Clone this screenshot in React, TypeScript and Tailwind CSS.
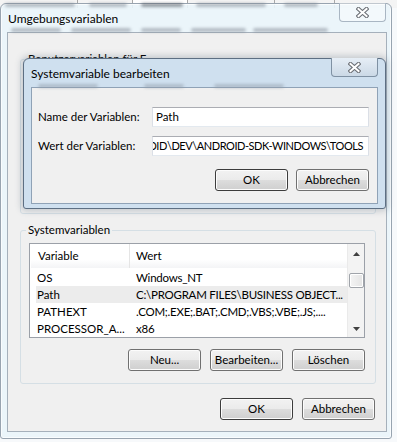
import React from "react";

const rows = [
  ["OS", "Windows_NT"],
  ["Path", "C:\\PROGRAM FILES\\BUSINESS OBJECT..."],
  ["PATHEXT", ".COM;.EXE;.BAT;.CMD;.VBS;.VBE;.JS;...."],
  ["PROCESSOR_A...", "x86"],
];

function Button({ label, className = "", isDefault = false }: { label: string; className?: string; isDefault?: boolean }) {
  return (
    <button
      className={`flex h-[22px] w-[73px] items-center justify-center rounded-[3px] border text-[11.5px] text-black bg-[linear-gradient(to_bottom,#f2f2f2_0%,#ebebeb_48%,#dddddd_50%,#cfcfcf_100%)] shadow-[inset_0_0_0_1px_#fcfcfc] ${
        isDefault ? "border-[#3c3c3c]" : "border-[#707070]"
      } ${className}`}
    >
      {label}
    </button>
  );
}

function CloseGlyph() {
  return (
    <svg width="13" height="11" viewBox="0 0 13 11">
      <path d="M2.5 2 L10.5 9 M10.5 2 L2.5 9" stroke="#6b6f75" strokeWidth="4.2" strokeLinecap="square" fill="none" />
      <path d="M2.5 2 L10.5 9 M10.5 2 L2.5 9" stroke="#ffffff" strokeWidth="2" strokeLinecap="square" fill="none" />
    </svg>
  );
}

function Blur({ className }: { className: string }) {
  return <span className={`absolute h-[4px] rounded-full bg-[#7d8590] opacity-50 blur-[1.5px] ${className}`} />;
}

function ListView() {
  return (
    <div className="ml-[8px] mt-[5px] flex h-[95px] w-[336px] overflow-hidden border border-[#9ba0a8] bg-white">
      <div className="flex min-w-0 flex-1 flex-col overflow-hidden pl-[1px]">
        <div className="flex h-[24px] shrink-0 bg-[linear-gradient(to_bottom,#ffffff_0%,#ffffff_65%,#f3f4f6_100%)] text-[11.5px] text-black">
          <div className="flex w-[99px] items-center border-r border-[#e5e5e5] pl-[7px]">Variable</div>
          <div className="flex flex-1 items-center pl-[6px]">Wert</div>
        </div>
        <div className="flex flex-col pl-[5px] pt-[1px]">
          {rows.map(([k, v]) => (
            <div
              key={k}
              className={`flex h-[17px] items-center whitespace-nowrap text-[11.5px] text-black ${k === "Path" ? "bg-[#ececec]" : ""}`}
            >
              <span className="w-[100px] shrink-0 pl-[1px]">{k}</span>
              <span className="tracking-[-0.25px]">{v}</span>
            </div>
          ))}
        </div>
      </div>
      <div className="flex w-[17px] shrink-0 flex-col items-center border-l border-[#eaeaea] bg-[#f3f3f3]">
        <div className="flex h-[18px] w-full shrink-0 items-center justify-center pt-[2px]">
          <svg width="7" height="4" viewBox="0 0 7 4" className="block">
            <path d="M0 4 L3.5 0 L7 4 Z" fill="#404040" />
          </svg>
        </div>
        <div className="mt-[11px] h-[15px] w-[15px] shrink-0 rounded-[2px] border border-[#a0a4aa] bg-[linear-gradient(to_right,#f4f4f4,#e4e4e4)] shadow-[inset_0_0_0_1px_#ffffff]" />
        <div className="flex-1" />
        <div className="flex h-[17px] w-full shrink-0 items-center justify-center">
          <svg width="7" height="4" viewBox="0 0 7 4" className="block">
            <path d="M0 0 L7 0 L3.5 4 Z" fill="#404040" />
          </svg>
        </div>
      </div>
    </div>
  );
}

export default function App() {
  return (
    <div className="relative h-[442px] w-[397px] overflow-hidden bg-[#f7f9fb] font-['Lato','Liberation_Sans',sans-serif]">
      {/* tab strip of the window behind */}
      <div className="absolute left-0 top-0 flex h-[8px] w-full bg-[#f4f4f4] blur-[0.6px]">
        <div className="w-[78px] border-r border-[#a8a8a8]" />
        <div className="w-[55px] border-r border-[#a8a8a8]" />
        <div className="w-[55px] border-r border-[#a8a8a8] bg-white" />
        <div className="w-[87px] border-r border-[#a8a8a8]" />
        <div className="w-[60px] border-r border-[#a8a8a8]" />
      </div>

      {/* Umgebungsvariablen window */}
      <div className="relative mt-[3px] flex h-[436px] w-[392px] flex-col rounded-t-[6px] rounded-b-[3px] border border-[#98a4b0] bg-[#e9f4fa]/90 shadow-[inset_0_0_0_1px_#ffffffb0]">
        <div className="relative h-[28px] shrink-0">
          <Blur className="left-[4px] top-[-1px] w-[70px]" />
          <Blur className="left-[88px] top-[-1px] w-[38px]" />
          <Blur className="left-[140px] top-[-1px] w-[42px] bg-[#40464e]" />
          <Blur className="left-[195px] top-[-1px] w-[70px]" />
          <Blur className="left-[283px] top-[-1px] w-[34px]" />
          <Blur className="left-[10px] top-[24px] w-[50px]" />
          <Blur className="left-[70px] top-[24px] w-[60px]" />
          <Blur className="left-[140px] top-[24px] w-[40px]" />
          <Blur className="left-[190px] top-[24px] w-[55px]" />
          <Blur className="left-[252px] top-[24px] w-[75px]" />
          <div className="relative pl-[7px] pt-[6px] text-[12px] text-black">Umgebungsvariablen</div>
          <div className="absolute right-[5px] top-[-1px] flex h-[19px] w-[47px] items-center justify-center rounded-b-[4px] border border-t-0 border-[#a9b6c3] bg-white/40">
            <CloseGlyph />
          </div>
        </div>

        <div className="ml-[6px] flex h-[400px] w-[380px] flex-col border border-[#a5b0bb] bg-[#f0f0f0]">
          <fieldset className="ml-[12px] mt-[18px] h-[163px] w-[356px] rounded-[3px] border border-[#d5dfe5]">
            <legend className="ml-[5px] px-[2px] text-[11.5px] leading-[16px] text-black">Benutzervariablen für E...</legend>
          </fieldset>

          <fieldset className="ml-[12px] mt-[8px] h-[162px] w-[356px] rounded-[3px] border border-[#d5dfe5]">
            <legend className="ml-[5px] px-[2px] text-[11.5px] leading-[16px] text-black">Systemvariablen</legend>
            <ListView />
            <div className="mr-[10px] mt-[11px] flex justify-end gap-[9px]">
              <Button label="Neu..." />
              <Button label="Bearbeiten..." />
              <Button label="Löschen" />
            </div>
          </fieldset>

          <div className="mr-[11px] mt-[14px] flex justify-end gap-[9px]">
            <Button label="OK" isDefault />
            <Button label="Abbrechen" />
          </div>
        </div>
      </div>

      {/* Systemvariable bearbeiten dialog */}
      <div className="absolute left-[23px] top-[58px] flex h-[151px] w-[363px] flex-col rounded-t-[6px] rounded-b-[3px] border border-[#5d6f83] bg-[#cfe0ef] shadow-[0_0_6px_2px_rgba(60,80,100,0.25)]">
        <div className="relative h-[28px] shrink-0">
          <Blur className="left-[14px] top-[25px] w-[60px] bg-[#8f9aa6]" />
          <Blur className="left-[120px] top-[25px] w-[40px] bg-[#8f9aa6]" />
          <Blur className="left-[190px] top-[25px] w-[70px] bg-[#8f9aa6]" />
          <div className="relative pl-[7px] pt-[6px] text-[12px] text-black">Systemvariable bearbeiten</div>
          <div className="absolute right-[7px] top-[-1px] flex h-[19px] w-[47px] items-center justify-center rounded-b-[4px] border border-t-0 border-[#7f91a3] bg-[linear-gradient(to_bottom,#e6eef6,#cbd9e6)]">
            <CloseGlyph />
          </div>
        </div>
        <div className="ml-[7px] flex h-[117px] w-[347px] flex-col border border-[#8fa2b6] bg-[#f0f0f0] pl-[6px] pr-[8px] pt-[19px]">
          <div className="flex items-center justify-between">
            <span className="text-[11.5px] text-black">Name der Variablen:</span>
            <div className="flex h-[20px] w-[217px] items-center border border-[#abadb3] border-l-[#dbdfe6] border-r-[#dbdfe6] border-b-[#e3e9ef] bg-white pl-[3px] text-[11.5px] text-black">
              Path
            </div>
          </div>
          <div className="mt-[9px] flex items-center justify-between">
            <span className="text-[11.5px] text-black">Wert der Variablen:</span>
            <div className="flex h-[20px] w-[217px] items-center justify-end overflow-hidden whitespace-nowrap border border-[#abadb3] border-l-[#dbdfe6] border-r-[#dbdfe6] border-b-[#e3e9ef] bg-white pr-[5px] text-[11px] tracking-[-0.45px] text-black">
              OID\DEV\ANDROID-SDK-WINDOWS\TOOLS
            </div>
          </div>
          <div className="mt-[13px] flex justify-end gap-[8px]">
            <Button label="OK" isDefault />
            <Button label="Abbrechen" />
          </div>
        </div>
      </div>
    </div>
  );
}
